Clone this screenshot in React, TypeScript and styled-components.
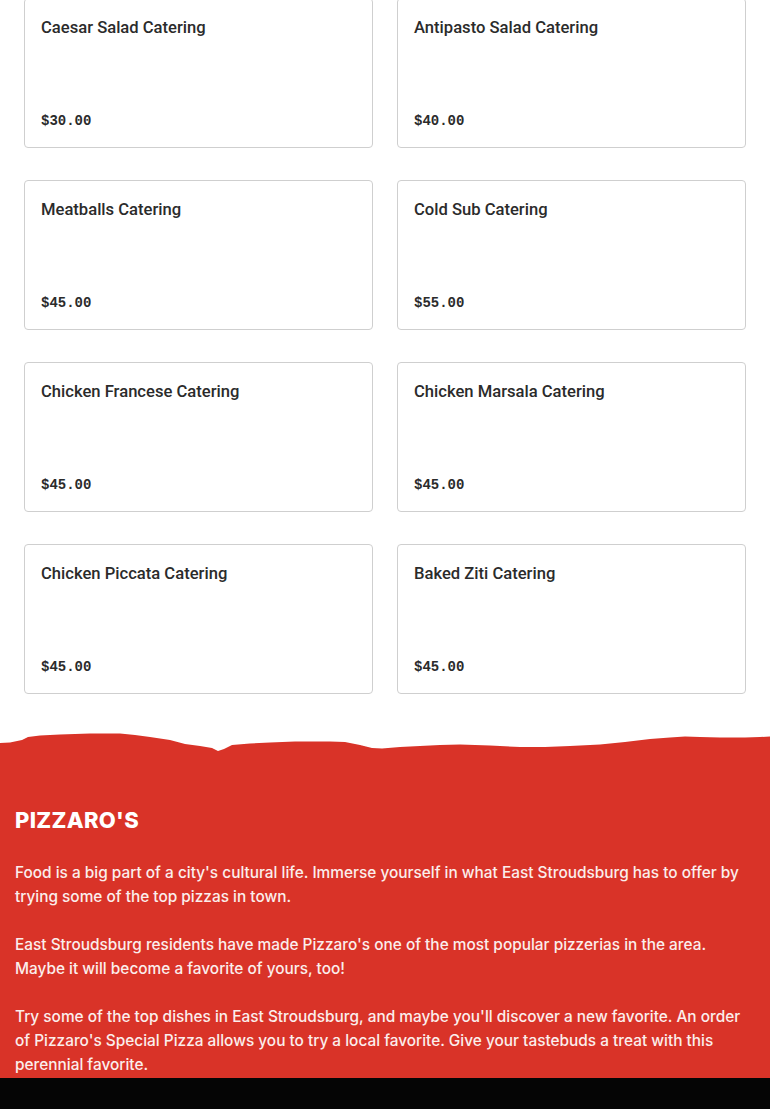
import React from 'react'
import styled, { createGlobalStyle } from 'styled-components'

const items = [
	{ name: 'Caesar Salad Catering', price: '$30.00' },
	{ name: 'Antipasto Salad Catering', price: '$40.00' },
	{ name: 'Meatballs Catering', price: '$45.00' },
	{ name: 'Cold Sub Catering', price: '$55.00' },
	{ name: 'Chicken Francese Catering', price: '$45.00' },
	{ name: 'Chicken Marsala Catering', price: '$45.00' },
	{ name: 'Chicken Piccata Catering', price: '$45.00' },
	{ name: 'Baked Ziti Catering', price: '$45.00' },
]

const paragraphs = [
	"Food is a big part of a city's cultural life. Immerse yourself in what East Stroudsburg has to offer by trying some of the top pizzas in town.",
	"East Stroudsburg residents have made Pizzaro's one of the most popular pizzerias in the area. Maybe it will become a favorite of yours, too!",
	"Try some of the top dishes in East Stroudsburg, and maybe you'll discover a new favorite. An order of Pizzaro's Special Pizza allows you to try a local favorite. Give your tastebuds a treat with this perennial favorite.",
]

const RED = '#d93328'

const GlobalStyle = createGlobalStyle`
	html, body {
		margin: 0;
		padding: 0;
		background: #fff;
		overflow: hidden;
	}
	body {
		font-family: Roboto, "Liberation Sans", sans-serif;
	}
`

const App = () => (
	<>
		<GlobalStyle />
		<Page>
			<MenuGrid>
				{items.map((item) => (
					<Card key={item.name}>
						<CardTitle>{item.name}</CardTitle>
						<CardPrice>{item.price}</CardPrice>
					</Card>
				))}
			</MenuGrid>
			<TornEdge viewBox="0 0 770 22" preserveAspectRatio="none">
				<path
					fill={RED}
					d="M0 12 L10 11.5 L22 9 L28 6 L40 4.5 L60 3.5 L90 2.5 L120 2.5 L135 4 L150 6 L170 9 L185 13 L200 15 L212 17 L218 20 L224 18 L232 14 L250 12.5 L270 11.5 L295 10.5 L330 10.5 L345 11 L360 14 L372 17 L382 17.5 L400 16 L420 15 L440 14 L460 13.5 L490 14.5 L520 16 L545 16 L570 15 L600 13.5 L625 11 L650 8 L670 6.5 L685 5.5 L700 6 L720 6.5 L745 6.5 L760 6 L770 5.5 L770 22 L0 22 Z"
				/>
			</TornEdge>
			<About>
				<AboutTitle>PIZZARO'S</AboutTitle>
				{paragraphs.map((p) => (
					<AboutText key={p.slice(0, 12)}>{p}</AboutText>
				))}
			</About>
			<Footer />
		</Page>
	</>
)

const Page = styled.div`
	display: flex;
	flex-direction: column;
	width: 770px;
`

const MenuGrid = styled.div`
	display: grid;
	grid-template-columns: 1fr 1fr;
	column-gap: 24px;
	row-gap: 32px;
	padding: 0 24px;
	margin-top: -2px;
`

const Card = styled.div`
	display: flex;
	flex-direction: column;
	justify-content: space-between;
	height: 150px;
	box-sizing: border-box;
	padding: 19px 16px 18px;
	border: 1px solid #cfcfcf;
	border-radius: 4px;
	background: #fff;
	color: #2b2b2b;
`

const CardTitle = styled.div`
	font-family: Roboto, "Liberation Sans", sans-serif;
	font-size: 16.6px;
	font-weight: 500;
	line-height: 20px;
`

const CardPrice = styled.div`
	font-family: "Liberation Mono", monospace;
	font-size: 14px;
	font-weight: 700;
	line-height: 18px;
	margin-bottom: -1px;
`

const TornEdge = styled.svg`
	display: block;
	width: 770px;
	height: 22px;
	margin-top: 37px;
`

const About = styled.section`
	display: flex;
	flex-direction: column;
	gap: 24px;
	background: ${RED};
	margin-top: -1px;
	padding: 55px 15px 1px;
	color: #fbeeec;
`

const AboutTitle = styled.h2`
	margin: 0 0 4px;
	font-family: Inter, "Liberation Sans", sans-serif;
	font-size: 22px;
	font-weight: 800;
	line-height: 26px;
	letter-spacing: 0.3px;
	color: #fff;
`

const AboutText = styled.p`
	margin: 0;
	font-family: Inter, Roboto, sans-serif;
	font-size: 15.4px;
	font-weight: 500;
	line-height: 24px;
`

const Footer = styled.div`
	height: 40px;
	background: #050505;
`

export default App
